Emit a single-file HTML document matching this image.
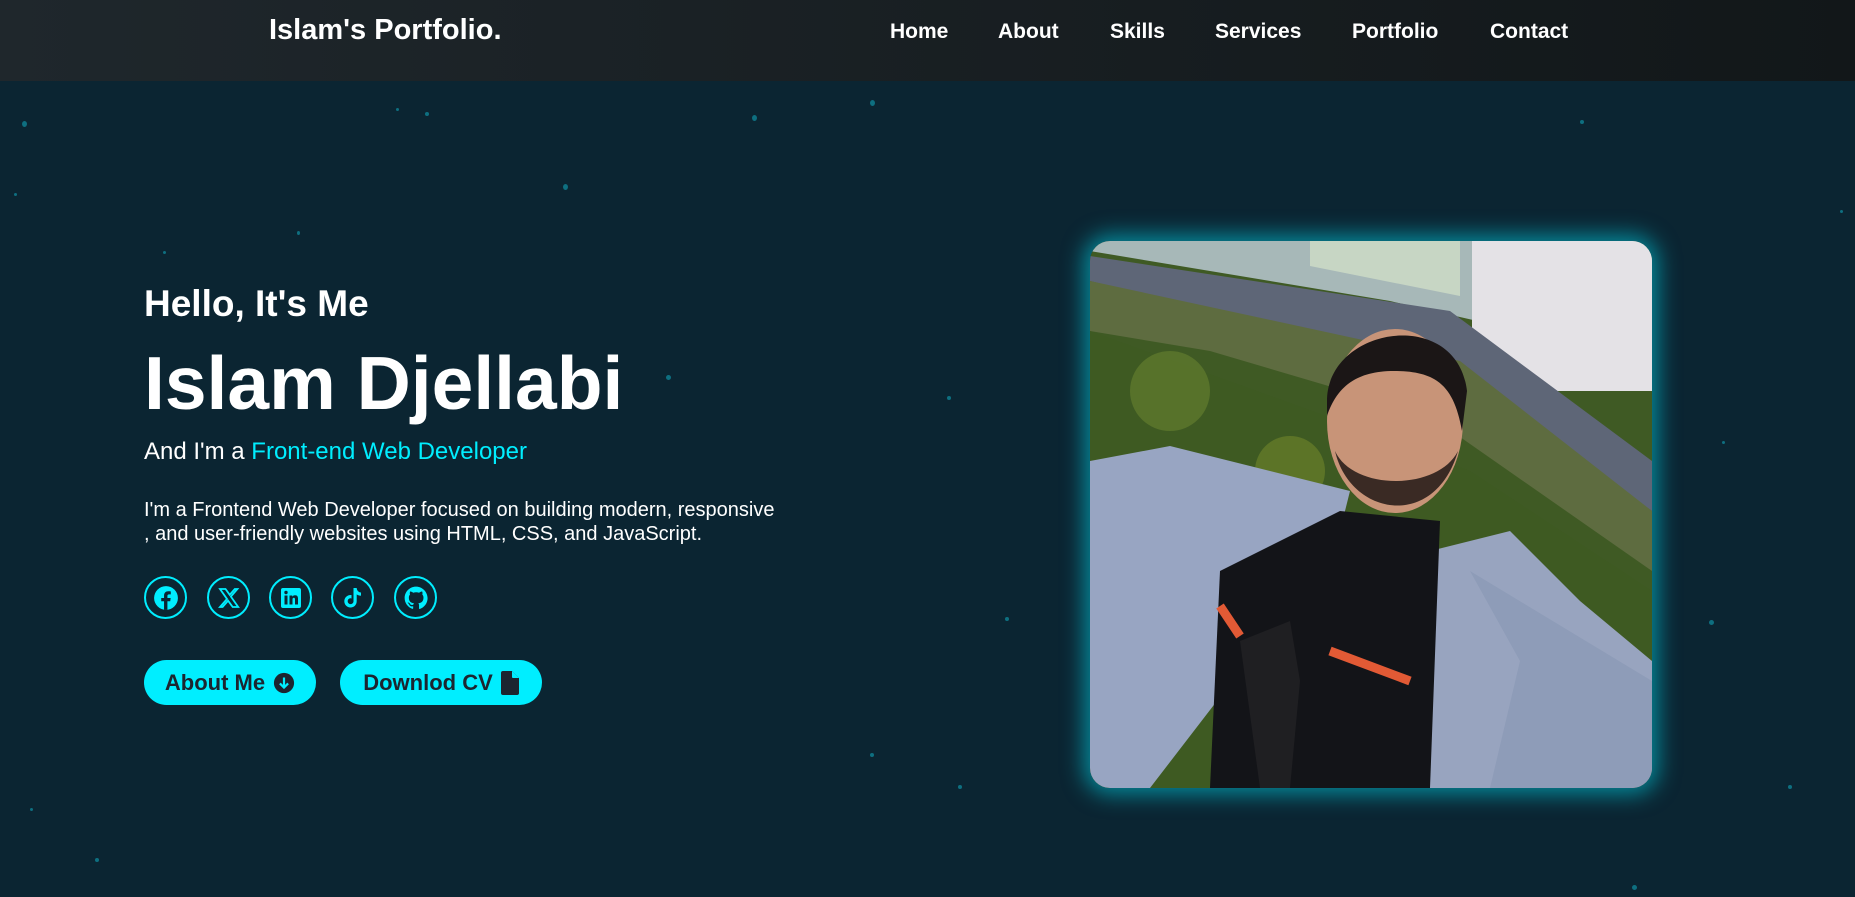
<!DOCTYPE html>
<html><head><meta charset="utf-8"><style>
*{margin:0;padding:0;box-sizing:border-box}
html,body{width:1855px;height:897px;overflow:hidden}
body{background:#0b2532;font-family:"Liberation Sans",Arial,sans-serif;color:#fff;position:relative}
header{position:absolute;left:0;top:0;width:1855px;height:81px;background:linear-gradient(90deg,#1f272c,#121719)}
.logo{position:absolute;left:269px;top:14px;font-size:29px;font-weight:bold}
nav a{position:absolute;top:20px;font-size:21px;font-weight:bold;color:#fff;text-decoration:none}
.t{position:absolute;left:144px;white-space:nowrap}
.dot{position:absolute;border-radius:50%;background:#0e6f80}
.ic{position:absolute;top:576px;width:43px;height:43px;border:2px solid #00eeff;border-radius:50%;display:flex;align-items:center;justify-content:center}
.btn{position:absolute;top:660px;height:45px;border-radius:23px;background:#00eeff;color:#1c2530;font-weight:bold;font-size:22px;display:flex;align-items:center;justify-content:center;gap:8px}
.photo{position:absolute;left:1090px;top:241px;width:562px;height:547px;border-radius:20px;overflow:hidden;box-shadow:0 0 22px 6px rgba(0,220,240,.55)}
</style></head><body>
<header>
<div class="logo">Islam's Portfolio.</div>
<nav><a style="left:890px">Home</a><a style="left:998px">About</a><a style="left:1110px">Skills</a><a style="left:1215px">Services</a><a style="left:1352px">Portfolio</a><a style="left:1490px">Contact</a></nav>
</header>
<div class="dot" style="left:22px;top:121px;width:5px;height:6px"></div>
<div class="dot" style="left:396px;top:108px;width:3px;height:3px"></div>
<div class="dot" style="left:425px;top:112px;width:4px;height:4px"></div>
<div class="dot" style="left:563px;top:184px;width:5px;height:6px"></div>
<div class="dot" style="left:752px;top:115px;width:5px;height:6px"></div>
<div class="dot" style="left:870px;top:100px;width:5px;height:6px"></div>
<div class="dot" style="left:297px;top:231px;width:3px;height:4px"></div>
<div class="dot" style="left:14px;top:193px;width:3px;height:3px"></div>
<div class="dot" style="left:163px;top:251px;width:3px;height:3px"></div>
<div class="dot" style="left:666px;top:375px;width:5px;height:5px"></div>
<div class="dot" style="left:947px;top:396px;width:4px;height:4px"></div>
<div class="dot" style="left:1005px;top:617px;width:4px;height:4px"></div>
<div class="dot" style="left:1709px;top:620px;width:5px;height:5px"></div>
<div class="dot" style="left:1722px;top:441px;width:3px;height:3px"></div>
<div class="dot" style="left:95px;top:858px;width:4px;height:4px"></div>
<div class="dot" style="left:958px;top:785px;width:4px;height:4px"></div>
<div class="dot" style="left:1632px;top:885px;width:5px;height:5px"></div>
<div class="dot" style="left:30px;top:808px;width:3px;height:3px"></div>
<div class="dot" style="left:870px;top:753px;width:4px;height:4px"></div>
<div class="dot" style="left:1788px;top:785px;width:4px;height:4px"></div>
<div class="dot" style="left:1580px;top:120px;width:4px;height:4px"></div>
<div class="dot" style="left:1840px;top:210px;width:3px;height:3px"></div>

<div class="t" style="top:283px;font-size:37px;font-weight:bold">Hello, It's Me</div>
<div class="t" style="top:340px;font-size:75px;font-weight:bold">Islam Djellabi</div>
<div class="t" style="top:438px;font-size:24px">And I'm a <span style="color:#00eeff">Front-end Web Developer</span></div>
<div class="t" style="top:498px;font-size:20px;line-height:24px">I'm a Frontend Web Developer focused on building modern, responsive<br>, and user-friendly websites using HTML, CSS, and JavaScript.</div>

<div class="ic" style="left:144px"><svg width="26" height="26" viewBox="0 0 24 24"><circle cx="12" cy="12" r="11" fill="#00eeff"/><path d="M13.3 23v-8h2.6l.4-3h-3v-1.9c0-.9.3-1.5 1.5-1.5h1.6V5.9c-.3 0-1.2-.1-2.3-.1-2.3 0-3.9 1.4-3.9 4V12H7.6v3h2.6v8z" fill="#0b2532"/></svg></div>
<div class="ic" style="left:207px"><svg width="24" height="24" viewBox="0 0 24 24"><path d="M3 3h5.5l4.2 5.8L17.8 3h2.6l-6.5 7.6L21.2 21h-5.5l-4.6-6.3L5.6 21H3l7-8z" fill="none" stroke="#00eeff" stroke-width="1.8"/></svg></div>
<div class="ic" style="left:269px"><svg width="24" height="24" viewBox="0 0 24 24"><rect x="2" y="2" width="20" height="20" rx="2" fill="#00eeff"/><rect x="5.5" y="9.5" width="3" height="9" fill="#0b2532"/><circle cx="7" cy="6.5" r="1.7" fill="#0b2532"/><path d="M10.5 9.5h2.8v1.3c.5-.9 1.5-1.5 2.8-1.5 2.3 0 2.9 1.4 2.9 3.5v5.7h-3v-5c0-1-.2-1.8-1.2-1.8s-1.3.8-1.3 1.8v5h-3z" fill="#0b2532"/></svg></div>
<div class="ic" style="left:331px"><svg width="24" height="24" viewBox="0 0 24 24"><path d="M12.5 2h3.2c.2 2.5 1.8 4.3 4.3 4.5v3.3c-1.6 0-3-.5-4.3-1.4v6.8c0 3.5-2.7 6.3-6.2 6.3S3.3 18.7 3.3 15.3 6 9 9.6 9c.3 0 .6 0 .9.1v3.4c-.3-.1-.6-.2-.9-.2-1.6 0-2.9 1.300-2.9 2.9s1.3 2.9 2.9 2.9 2.9-1.3 2.9-2.9z" fill="#00eeff"/></svg></div>
<div class="ic" style="left:394px"><svg width="26" height="26" viewBox="0 0 24 24"><path d="M12 1.5C6.2 1.5 1.5 6.2 1.5 12c0 4.6 3 8.6 7.2 10 .5.1.7-.2.7-.5v-1.9c-2.9.6-3.500-1.3-3.5-1.3-.5-1.2-1.2-1.5-1.2-1.5-.9-.6.1-.6.1-.6 1 .1 1.6 1.1 1.6 1.1.9 1.6 2.5 1.1 3.1.9.1-.7.4-1.1.7-1.4-2.3-.3-4.8-1.2-4.8-5.2 0-1.1.4-2.1 1.1-2.8-.1-.3-.5-1.3.1-2.8 0 0 .9-.3 2.9 1.1a10 10 0 0 1 5.3 0c2-1.4 2.9-1.1 2.9-1.1.6 1.5.2 2.5.1 2.8.7.7 1.1 1.7 1.1 2.8 0 4-2.5 4.9-4.8 5.2.4.3.7 1 .7 1.9v2.9c0 .3.2.6.7.5 4.2-1.4 7.2-5.4 7.2-10C22.5 6.2 17.8 1.5 12 1.5z" fill="#00eeff"/></svg></div>

<div class="btn" style="left:144px;width:172px">About Me <svg width="22" height="22" viewBox="0 0 24 24"><circle cx="12" cy="12" r="11" fill="#1c2530"/><path d="M12 6v11M7.5 12.5 12 17l4.5-4.5" stroke="#00eeff" stroke-width="2.4" fill="none"/></svg></div>
<div class="btn" style="left:340px;width:202px">Downlod CV <svg width="18" height="24" viewBox="0 0 18 24"><path d="M2 0h9l7 7v15a2 2 0 0 1-2 2H2a2 2 0 0 1-2-2V2a2 2 0 0 1 2-2z" fill="#1c2530"/><path d="M11 0v6a1 1 0 0 0 1 1h6" fill="#00eeff"/></svg></div>

<div class="photo"><svg width="562" height="547" viewBox="0 0 562 547">
<rect width="562" height="547" fill="#3f5a24"/>
<path d="M0 0H562V120L300 60 0 10z" fill="#a7b8b8"/>
<path d="M220 0h150v55L220 25z" fill="#c7d6c4"/>
<rect x="382" y="0" width="180" height="150" fill="#e4e2e6"/>
<path d="M0 15L360 70 562 220V270L360 130 0 40z" fill="#5e6677"/>
<path d="M0 40L370 120 562 270V330L340 175 120 110 0 90z" fill="#5e6c40"/>
<path d="M0 90L250 180 380 230 562 350V547H0z" fill="#3e5a22"/>
<circle cx="80" cy="150" r="40" fill="#6f8a32" opacity=".5"/>
<circle cx="200" cy="230" r="35" fill="#8a9a30" opacity=".4"/>
<path d="M0 220L80 205 200 235 260 250 240 330 150 430 60 547H0z" fill="#98a5c2"/>
<path d="M340 310L420 290 490 360 562 420V547H330z" fill="#98a4bf"/>
<path d="M130 330 250 270 350 280 340 547H120z" fill="#131418"/>
<ellipse cx="305" cy="180" rx="68" ry="92" fill="#c89478"/>
<path d="M237 160c0-75 130-95 140-10l-5 40c-8-45-25-60-68-60-40 0-58 18-67 45z" fill="#1b1616"/>
<path d="M245 210c15 65 100 80 123 0-20 40-105 40-123 0z" fill="#3a2a24"/>
<path d="M150 400 200 380 210 440 200 547H170z" fill="#1f1f22"/>
<path d="M130 365 150 395M240 410 320 440" stroke="#e25a35" stroke-width="9"/>
<path d="M380 330 430 420 400 547H562V440z" fill="#8e9cb8"/>
</svg></div>
</body></html>
